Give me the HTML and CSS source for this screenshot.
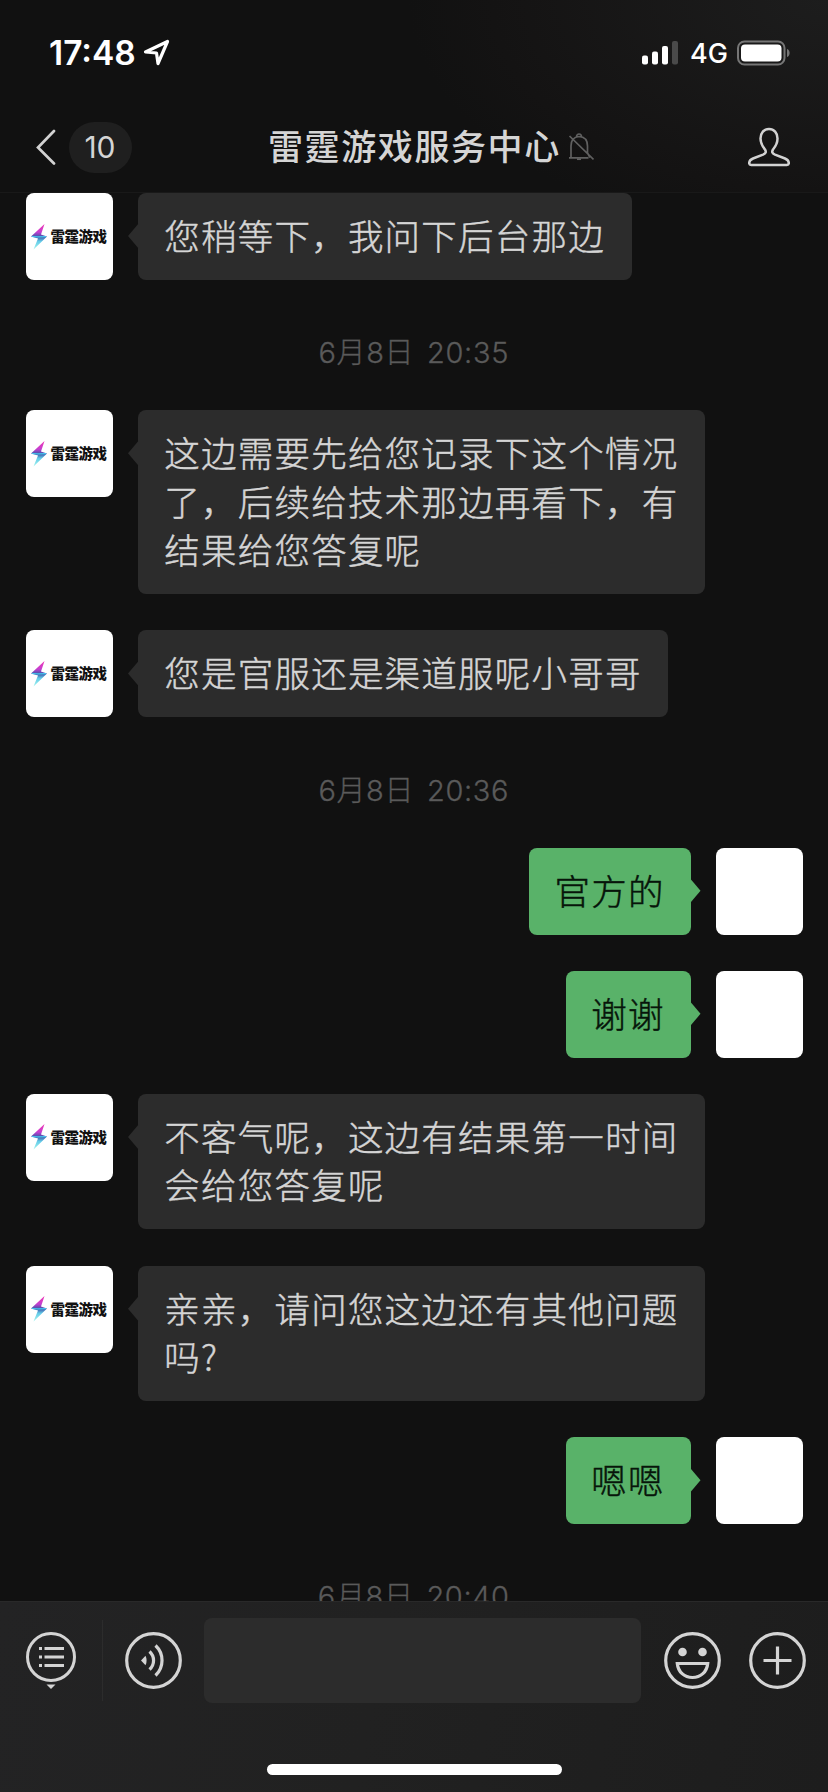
FILE: index.html
```html
<!DOCTYPE html>
<html lang="zh-CN">
<head>
<meta charset="utf-8">
<title>雷霆游戏服务中心</title>
<link rel="stylesheet" href="styles.css">
</head>
<body>
<svg class="defs" width="0" height="0" aria-hidden="true">
  <defs>
    <linearGradient id="bolt" x1="0" y1="0" x2="0" y2="1">
      <stop offset="0" stop-color="#f136b4"/><stop offset=".32" stop-color="#c53fd0"/><stop offset=".5" stop-color="#3d55a8"/><stop offset=".68" stop-color="#63cbe8"/><stop offset="1" stop-color="#a6f5ee"/>
    </linearGradient>
    <symbol id="logo" viewBox="0 0 16 26">
      <path fill="url(#bolt)" d="M13.500 0 0 12.500l7 2L2.500 25.500 16 12.500l-6-2z"/>
      <path d="M1 12.500l6 .4 8-.2" fill="none" stroke="#46c6ee" stroke-width="1.200"/>
    </symbol>
  </defs>
</svg>
<div class="app">
  <header class="top">
    <div class="status">
      <span class="time">17:48</span>
      <svg class="loc" viewBox="0 0 28 28"><path d="M2.500 13 24.500 2.500 15 24.500 13.500 14z" fill="none" stroke="#fff" stroke-width="3.200" stroke-linejoin="round"/></svg>
      <svg class="signal" viewBox="0 0 38 26"><rect x="1" y="15.500" width="6" height="9" rx="2" fill="#fff"/><rect x="11" y="11.500" width="6" height="13" rx="2" fill="#fff"/><rect x="21" y="6" width="6" height="18.500" rx="2" fill="#fff"/><rect x="31" y="1" width="6" height="23.500" rx="2" fill="#4a4a4a"/></svg>
      <span class="net">4G</span>
      <svg class="battery" viewBox="0 0 54 26"><rect x="1" y="1.500" width="46.500" height="23" rx="6.500" fill="none" stroke="#767676" stroke-width="2"/><rect x="4" y="4.500" width="40.500" height="17" rx="4" fill="#fff"/><path d="M50 9c3.500 1 3.500 7 0 8z" fill="#767676"/></svg>
    </div>
    <nav class="nav">
      <svg class="back" viewBox="0 0 20 36"><path d="M18 2 2 18.500 18 34.500" fill="none" stroke="#d2d2d2" stroke-width="2.700" stroke-linecap="round"/></svg>
      <span class="count">10</span>
      <h1 class="title">雷霆游戏服务中心</h1>
      <svg class="mute" viewBox="0 0 26 28"><g fill="none" stroke="#606060" stroke-width="1.700"><path d="M1 24.800h19.500M3 24.500V13C3 7.500 6 4 11 3.500c5.500.3 8.500 4 8.500 9.500v7l2.500 4.500M8.500 4c0-4 5-4 5 0M1.500 3 25.500 26.500"/><path d="M9 26.200h4"/></g></svg>
      <svg class="person" viewBox="0 0 42 40"><path d="M21 2c-5 0-8.500 4-8.500 9.500 0 4.500 2 8 4.500 11 1.500 2.500.8 4-2 5.200L5 31.500c-3 1.300-3.800 2.700-3.800 4.500 0 1.200.8 2 2 2h35.600c1.200 0 2-.8 2-2 0-1.800-.8-3.200-3.800-4.500l-10-3.800c-2.800-1.200-3.500-2.700-2-5.200 2.500-3 4.500-6.500 4.500-11C29.500 6 26 2 21 2z" fill="none" stroke="#d2d2d2" stroke-width="2.500"/></svg>
    </nav>
  </header>

  <main class="chat">
    <div class="row"><div class="avatar"><svg class="bolt"><use href="#logo"/></svg><span class="brand">雷霆游戏</span></div><div class="bubble">您稍等下，我问下后台那边</div></div>
    <time class="stamp">6月8日 20:35</time>
    <div class="row"><div class="avatar"><svg class="bolt"><use href="#logo"/></svg><span class="brand">雷霆游戏</span></div><div class="bubble">这边需要先给您记录下这个情况<br>了，后续给技术那边再看下，有<br>结果给您答复呢</div></div>
    <div class="row"><div class="avatar"><svg class="bolt"><use href="#logo"/></svg><span class="brand">雷霆游戏</span></div><div class="bubble">您是官服还是渠道服呢小哥哥</div></div>
    <time class="stamp">6月8日 20:36</time>
    <div class="row mine"><div class="avatar"></div><div class="bubble">官方的</div></div>
    <div class="row mine"><div class="avatar"></div><div class="bubble">谢谢</div></div>
    <div class="row"><div class="avatar"><svg class="bolt"><use href="#logo"/></svg><span class="brand">雷霆游戏</span></div><div class="bubble">不客气呢，这边有结果第一时间<br>会给您答复呢</div></div>
    <div class="row"><div class="avatar"><svg class="bolt"><use href="#logo"/></svg><span class="brand">雷霆游戏</span></div><div class="bubble">亲亲，请问您这边还有其他问题<br>吗?</div></div>
    <div class="row mine"><div class="avatar"></div><div class="bubble">嗯嗯</div></div>
    <time class="stamp">6月8日 20:40</time>
  </main>

  <footer class="bottom">
    <div class="tools">
      <div class="menu"><svg class="list" viewBox="0 0 50 58"><circle cx="25" cy="25" r="23.500" fill="none" stroke="#d4d4d4" stroke-width="3"/><path d="M13 16.500h3M18.500 16.500H38M13 25h3M18.500 25H38M13 33.500h3M18.500 33.500H38" stroke="#d4d4d4" stroke-width="3.200"/><path d="M20.500 52.500h9L25 57z" fill="#d4d4d4"/></svg></div>
      <svg class="round voice" viewBox="0 0 57 57"><g fill="none" stroke="#d4d4d4" stroke-width="3.200"><circle cx="28.500" cy="28.500" r="26.800"/><path d="M24.500 19.500a12 12 0 0 1 0 18M30.500 13.500a20.500 20.500 0 0 1 0 30"/></g><path d="M16 28.500l4.500-4.700q2.300 4.700 0 9.400z" fill="#d4d4d4"/></svg>
      <div class="input"></div>
      <svg class="round smile" viewBox="0 0 57 57"><circle cx="28.500" cy="28.500" r="26.800" fill="none" stroke="#d4d4d4" stroke-width="3.200"/><circle cx="18.500" cy="20" r="4.300" fill="#d4d4d4"/><circle cx="38.500" cy="20" r="4.300" fill="#d4d4d4"/><path d="M13.300 31.500h30.400c-.8 8.500-7 14-15.200 14s-14.400-5.500-15.200-14z" fill="none" stroke="#d4d4d4" stroke-width="3.200"/></svg>
      <svg class="round plus" viewBox="0 0 57 57"><g fill="none" stroke="#d4d4d4" stroke-width="3.200"><circle cx="28.500" cy="28.500" r="26.800"/><path d="M14.500 28.500h28M28.500 14.500v28"/></g></svg>
    </div>
    <div class="home"></div>
  </footer>
</div>
</body>
</html>
```
FILE: styles.css
```css
* { box-sizing: border-box; }
body { margin: 0; background: #111; font-family: Inter, "Noto Sans CJK SC", sans-serif; }
svg { display: block; flex: none; }
.defs { position: absolute; }
.app { width: 828px; height: 1792px; display: flex; flex-direction: column; overflow: hidden; color: #d5d5d5; }

.top { height: 193px; flex: none; background: radial-gradient(ellipse 420px 240px at 100% 0, #1d1d1d, #141313 80%, #111 100%); border-bottom: 1px solid #191919; }
.status { height: 106px; display: flex; align-items: center; padding-left: 49px; color: #fff; }
.time { width: 94px; font-size: 33.500px; font-weight: 600; line-height: 40px; white-space: nowrap; }
.loc { width: 28px; height: 28px; }
.signal { width: 38px; height: 26px; margin-left: 470px; }
.net { width: 47px; margin-left: 11px; font-size: 27px; font-weight: 500; line-height: 32px; margin-top: 2px; }
.battery { width: 54px; height: 26px; }

.nav { height: 82px; display: flex; align-items: center; padding-left: 35.500px; }
.back { width: 20px; height: 36px; }
.count { width: 63px; height: 51px; margin-left: 13px; border-radius: 26px; background: #1f1f1f; text-align: center; font-size: 30px; line-height: 51px; }
.title { width: 295px; margin: -4px 0 0 136.500px; font: 500 35px/50px "Noto Sans CJK SC", sans-serif; letter-spacing: 1.600px; white-space: nowrap; }
.mute { width: 26px; height: 28px; margin-left: 5px; }
.person { width: 42px; height: 40px; margin-left: 153.500px; }

.chat { flex: 1; min-height: 0; overflow: hidden; display: flex; flex-direction: column; gap: 36.150px; padding: 0 26px 0 25.500px; }
.row { display: flex; align-items: flex-start; gap: 25.500px; flex: none; }
.mine { flex-direction: row-reverse; }
.avatar { width: 87px; height: 87px; border-radius: 8px; background: #fff; flex: none; display: flex; align-items: center; padding-left: 5px; }
.bolt { width: 16px; height: 26px; }
.brand { margin: -1px 0 0 4px; font: 900 14.500px/20px "Noto Sans CJK SC", sans-serif; letter-spacing: -.5px; color: #111; white-space: nowrap; }
.bubble { position: relative; padding: 18px 26.700px 20.500px 26.300px; border-radius: 8px; background: #2c2c2c; font: 300 35.500px/48.500px "Noto Sans CJK SC", sans-serif; letter-spacing: 1.220px; -webkit-text-stroke: .45px currentColor; white-space: nowrap; }
.bubble::before { content: ""; position: absolute; left: -10px; top: 30px; width: 11px; height: 26px; background: inherit; clip-path: polygon(0 50%, 100% 0, 100% 100%); }
.mine { margin-right: -1px; }
.mine .bubble { padding-left: 25.500px; padding-right: 25.800px; background: #59b269; color: #07150a; }
.mine .bubble::before { left: auto; right: -10px; clip-path: polygon(100% 50%, 0 0, 0 100%); }
.stamp { height: 58px; flex: none; text-align: center; font-size: 29px; font-weight: 300; line-height: 73px; letter-spacing: .65px; word-spacing: 4px; color: #5a5a5a; -webkit-text-stroke: .3px currentColor; }

.bottom { height: 191px; flex: none; border-top: 1px solid #292929; background: linear-gradient(100deg, #232324, #212121 45%, #1d1d1d); }
.tools { height: 116px; display: flex; align-items: center; }
.menu { width: 103px; height: 81px; padding: 12px 0 0 26px; border-right: 1px solid #2c2c2c; }
.list { width: 50px; height: 58px; }
.round { width: 57px; height: 57px; }
.voice { margin-left: 21.500px; }
.input { width: 437px; height: 85px; margin-left: 22.500px; border-radius: 8px; background: #2c2c2c; }
.smile { margin-left: 22.500px; }
.plus { margin-left: 28px; }
.home { width: 295px; height: 11px; margin: 46px auto 0; border-radius: 6px; background: #fff; }
```
